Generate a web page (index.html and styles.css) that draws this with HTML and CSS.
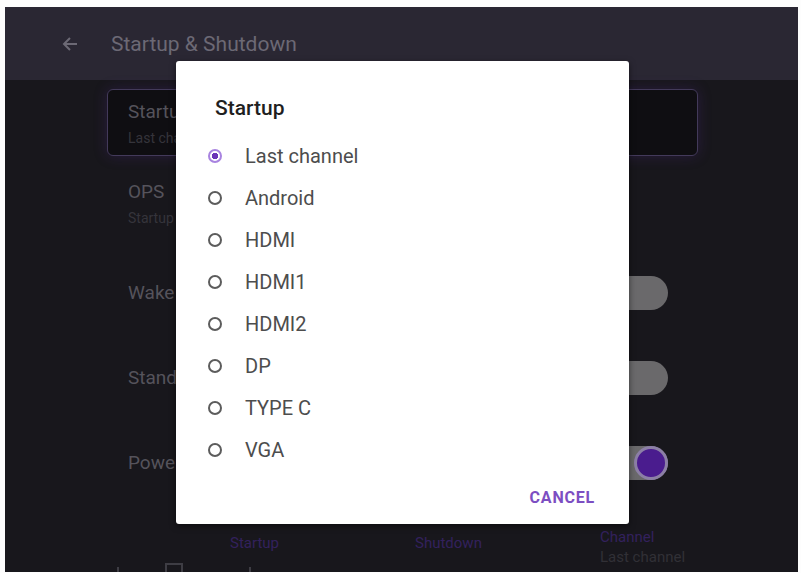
FILE: index.html
```html
<!DOCTYPE html>
<html lang="en">

<head>
    <meta charset="UTF-8">
    <meta name="viewport" content="width=device-width, initial-scale=1.0">
    <title>Startup &amp; Shutdown</title>
    <link rel="stylesheet" href="styles.css">
</head>

<body>
    <div class="screen">
        <div class="header">
            <svg class="back" width="16" height="16" viewBox="0 0 16 16">
                <path d="M15 8H2M8 2L2 8l6 6" fill="none" stroke="#6c6975" stroke-width="2"/>
            </svg>
            <span class="header-title">Startup &amp; Shutdown</span>
        </div>

        <div class="list">
            <div class="card">
                <div class="row-title">Startup</div>
                <div class="row-sub">Last channel</div>
            </div>
            <div class="row row-ops">
                <div>
                    <div class="row-title">OPS</div>
                    <div class="row-sub">Startup</div>
                </div>
            </div>
            <div class="row">
                <div class="row-title">Wake on LAN</div>
                <div class="toggle"><span class="thumb"></span></div>
            </div>
            <div class="row">
                <div class="row-title">Standby</div>
                <div class="toggle"><span class="thumb"></span></div>
            </div>
            <div class="row">
                <div class="row-title">Power</div>
                <div class="toggle on"><span class="thumb"></span></div>
            </div>
            <div class="tabs">
                <div class="tab-gap"></div>
                <div class="tab">Startup</div>
                <div class="tab">Shutdown</div>
                <div class="tab-channel">
                    <div class="tab-name">Channel</div>
                    <div class="tab-sub">Last channel</div>
                </div>
            </div>
            <div class="icons">
                <span class="ic ic-line"></span>
                <span class="ic ic-box"></span>
                <span class="ic ic-line ic-last"></span>
            </div>
        </div>

        <!-- dialog over the settings list -->
        <div class="dialog">
            <div class="dialog-title">Startup</div>
            <div class="options">
                <div class="option selected"><span class="radio"></span>Last channel</div>
                <div class="option"><span class="radio"></span>Android</div>
                <div class="option"><span class="radio"></span>HDMI</div>
                <div class="option"><span class="radio"></span>HDMI1</div>
                <div class="option"><span class="radio"></span>HDMI2</div>
                <div class="option"><span class="radio"></span>DP</div>
                <div class="option"><span class="radio"></span>TYPE C</div>
                <div class="option"><span class="radio"></span>VGA</div>
            </div>
            <div class="dialog-footer">
                <span class="cancel">CANCEL</span>
            </div>
        </div>
    </div>
</body>

</html>
```

FILE: styles.css
```css
* {
    margin: 0;
    padding: 0;
    box-sizing: border-box;
}

body {
    background: #fdfdfd;
    font-family: Roboto, "Noto Sans", sans-serif;
}

.screen {
    position: relative;
    margin: 7px 0 0 5px;
    width: 793px;
    height: 565px;
    background: #18171c;
    overflow: hidden;
}

.header {
    display: flex;
    align-items: center;
    height: 73px;
    padding-left: 57px;
    background: #2a2733;
}

.header .back {
    margin-right: 33px;
}

.header-title {
    font-size: 21px;
    color: #6c6975;
}

.list {
    width: 591px;
    margin-left: 102px;
}

.card {
    margin-top: 9px;
    height: 67px;
    padding: 10px 20px;
    border: 1.5px solid #433a5a;
    border-radius: 6px;
    background: #0f0e12;
    box-shadow: 0 0 14px rgba(80, 40, 140, 0.3);
}

.row-title {
    font-size: 19px;
    line-height: 24px;
    color: #55535b;
}

.row-sub {
    font-size: 14px;
    line-height: 20px;
    margin-top: 4px;
    color: #35343b;
}

.row {
    display: flex;
    align-items: center;
    justify-content: space-between;
    height: 85px;
    padding: 0 30px 0 21px;
}

.row-ops {
    height: 94px;
    padding-top: 2px;
}

.toggle {
    position: relative;
    width: 72px;
    height: 34px;
    border-radius: 17px;
    background: #6a696b;
}

.toggle .thumb {
    position: absolute;
    top: 3px;
    left: 3px;
    width: 28px;
    height: 28px;
    border-radius: 50%;
    background: #1d1c20;
}

.toggle.on .thumb {
    top: 0;
    left: auto;
    right: 0;
    width: 34px;
    height: 34px;
    background: #4a1c8e;
    border: 3px solid #8c7fa6;
}

.tabs {
    display: flex;
    height: 58px;
    padding-top: 28px;
    font-size: 15px;
    line-height: 20px;
}

.tab-gap {
    flex-shrink: 0;
    width: 123px;
}

.tab {
    flex-shrink: 0;
    width: 185px;
    color: #33215c;
}

.tab-channel {
    margin-top: -6px;
}

.tab-name {
    color: #33215c;
}

.tab-sub {
    color: #313036;
}

.icons {
    display: flex;
    gap: 46px;
    padding-left: 10px;
}

.ic {
    display: block;
    border: 2px solid #3e3d44;
}

.ic-line {
    width: 2px;
    height: 12px;
    border-width: 0 0 0 2px;
    margin-top: 4px;
}

.ic-last {
    margin-left: 20px;
}

.ic-box {
    width: 18px;
    height: 14px;
}

.dialog {
    position: absolute;
    left: 171px;
    top: 54px;
    width: 453px;
    height: 463px;
    padding: 33px 34px 0 39px;
    background: #ffffff;
    border-radius: 3px;
    box-shadow: 0 2px 6px rgba(0, 0, 0, 0.5);
}

.dialog-title {
    font-size: 21px;
    font-weight: 500;
    line-height: 28px;
    color: #1f1f1f;
}

.options {
    margin-top: 13px;
}

.option {
    display: flex;
    align-items: center;
    height: 42px;
    margin-left: -7px;
    font-size: 20px;
    color: #4d4d4d;
}

.radio {
    width: 14px;
    height: 14px;
    margin-right: 23px;
    border: 2px solid #5c5c5c;
    border-radius: 50%;
}

.option.selected .radio {
    border-color: #a883e0;
    background: radial-gradient(circle, #6c34b8 0 3px, #ffffff 3.5px);
}

.dialog-footer {
    display: flex;
    justify-content: flex-end;
    margin-top: 17px;
}

.cancel {
    font-size: 16px;
    font-weight: 700;
    letter-spacing: 0.8px;
    line-height: 20px;
    color: #7c4ec2;
}
```
